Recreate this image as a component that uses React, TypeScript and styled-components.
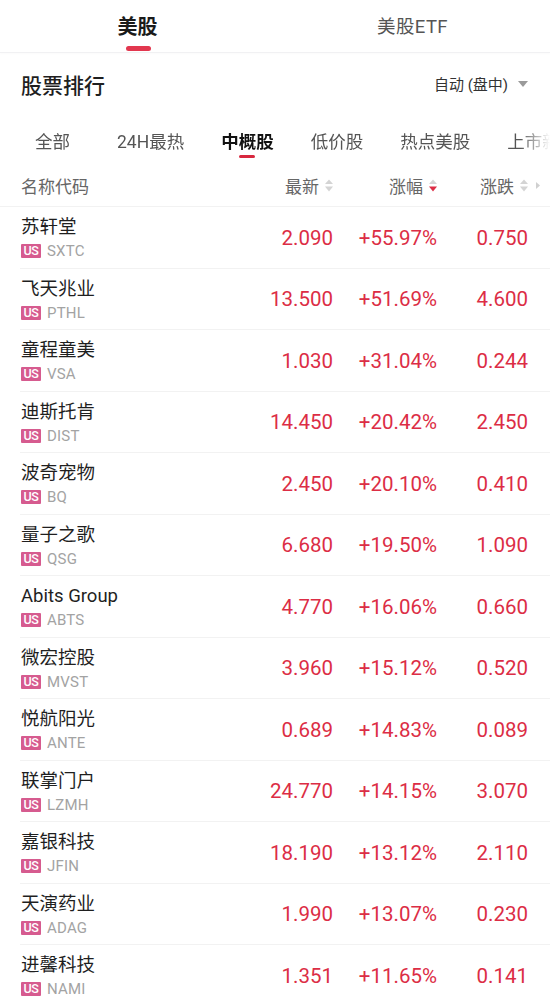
import React from 'react';
import styled, { createGlobalStyle } from 'styled-components';

interface Stock {
  name: string;
  code: string;
  price: string;
  pct: string;
  change: string;
}

const stocks: Stock[] = [
  { name: '苏轩堂', code: 'SXTC', price: '2.090', pct: '+55.97%', change: '0.750' },
  { name: '飞天兆业', code: 'PTHL', price: '13.500', pct: '+51.69%', change: '4.600' },
  { name: '童程童美', code: 'VSA', price: '1.030', pct: '+31.04%', change: '0.244' },
  { name: '迪斯托肯', code: 'DIST', price: '14.450', pct: '+20.42%', change: '2.450' },
  { name: '波奇宠物', code: 'BQ', price: '2.450', pct: '+20.10%', change: '0.410' },
  { name: '量子之歌', code: 'QSG', price: '6.680', pct: '+19.50%', change: '1.090' },
  { name: 'Abits Group', code: 'ABTS', price: '4.770', pct: '+16.06%', change: '0.660' },
  { name: '微宏控股', code: 'MVST', price: '3.960', pct: '+15.12%', change: '0.520' },
  { name: '悦航阳光', code: 'ANTE', price: '0.689', pct: '+14.83%', change: '0.089' },
  { name: '联掌门户', code: 'LZMH', price: '24.770', pct: '+14.15%', change: '3.070' },
  { name: '嘉银科技', code: 'JFIN', price: '18.190', pct: '+13.12%', change: '2.110' },
  { name: '天演药业', code: 'ADAG', price: '1.990', pct: '+13.07%', change: '0.230' },
  { name: '进馨科技', code: 'NAMI', price: '1.351', pct: '+11.65%', change: '0.141' },
];

const categories = ['全部', '24H最热', '中概股', '低价股', '热点美股', '上市新股'];

const RED = '#dc2d45';

const SortIcon: React.FC<{ down?: boolean }> = ({ down }) => (
  <svg width="8" height="13" viewBox="0 0 8 13">
    <polygon points="0,5 4,0.5 8,5" fill="#d4d4d4" />
    <polygon points="0,7.5 8,7.5 4,12.5" fill={down ? RED : '#d4d4d4'} />
  </svg>
);

const App: React.FC = () => {
  //render
  return (
    <Page>
      <GlobalStyle />
      <TopTabs>
        <TopTab active>美股</TopTab>
        <TopTab>美股ETF</TopTab>
      </TopTabs>
      <TitleBar>
        <Title>股票排行</Title>
        <Mode>
          自动 (盘中)
          <svg width="10" height="6" viewBox="0 0 10 6">
            <polygon points="0,0 10,0 5,6" fill="#9a9a9a" />
          </svg>
        </Mode>
      </TitleBar>
      <CatBar>
        {categories.map((c) => (
          <CatTab key={c} active={c === '中概股'}>
            {c}
          </CatTab>
        ))}
      </CatBar>
      <HeadRow>
        <HeadCell align="left">名称代码</HeadCell>
        <HeadCell>
          最新 <SortIcon />
        </HeadCell>
        <HeadCell>
          涨幅 <SortIcon down />
        </HeadCell>
        <HeadCell>
          涨跌 <SortIcon />
        </HeadCell>
        <MoreArrow>
          <svg width="4" height="7" viewBox="0 0 4 7">
            <polygon points="0,0 4,3.5 0,7" fill="#d0d0d0" />
          </svg>
        </MoreArrow>
      </HeadRow>
      <List>
        {stocks.map((s) => (
          <Row key={s.code}>
            <NameCell>
              <Name>{s.name}</Name>
              <CodeLine>
                <Badge>US</Badge>
                <Ticker>{s.code}</Ticker>
              </CodeLine>
            </NameCell>
            <Num>{s.price}</Num>
            <Num>{s.pct}</Num>
            <Num>{s.change}</Num>
            <span />
          </Row>
        ))}
      </List>
    </Page>
  );
};

//styles
const GlobalStyle = createGlobalStyle`
  body {
    margin: 0;
    background: #fff;
    font-family: Roboto, "Noto Sans CJK SC", sans-serif;
    color: #1f1f1f;
  }
`;

const Page = styled.div`
  width: 550px;
  height: 1005px;
  overflow: hidden;
  background: #fff;
`;

const TopTabs = styled.div`
  display: flex;
  height: 52px;
  border-bottom: 1px solid #f1f1f3;
  box-shadow: 0 1px 2px rgba(0, 0, 0, 0.02);
`;

const TopTab = styled.div<{ active?: boolean }>`
  position: relative;
  flex: 1;
  text-align: center;
  padding-top: 15px;
  line-height: 24px;
  font-size: ${(p) => (p.active ? '20px' : '18.5px')};
  font-weight: ${(p) => (p.active ? 600 : 400)};
  color: ${(p) => (p.active ? '#1a1a1a' : '#555')};
  letter-spacing: ${(p) => (p.active ? '0' : '0.4px')};
  &::after {
    content: '';
    display: ${(p) => (p.active ? 'block' : 'none')};
    position: absolute;
    left: 50%;
    bottom: 1px;
    width: 25px;
    height: 5px;
    margin-left: -12px;
    border-radius: 3px;
    background: #e2374f;
  }
`;

const TitleBar = styled.div`
  display: flex;
  align-items: center;
  justify-content: space-between;
  height: 61px;
  padding: 0 22px 0 21px;
`;

const Title = styled.div`
  font-size: 21px;
  font-weight: 500;
  color: #1f1f1f;
`;

const Mode = styled.div`
  display: flex;
  align-items: center;
  gap: 10px;
  font-size: 15px;
  color: #333;
`;

const CatBar = styled.div`
  display: flex;
  gap: 37px;
  height: 51px;
  padding-left: 35px;
  white-space: nowrap;
  overflow: hidden;
  -webkit-mask-image: linear-gradient(to right, #000 calc(100% - 30px), transparent 100%);
  mask-image: linear-gradient(to right, #000 calc(100% - 30px), transparent 100%);
`;

const CatTab = styled.div<{ active?: boolean }>`
  position: relative;
  padding-top: 18px;
  line-height: 20px;
  font-size: 17.5px;
  font-weight: ${(p) => (p.active ? 700 : 400)};
  color: ${(p) => (p.active ? '#111' : '#555')};
  &:first-child {
    margin-right: 10px;
  }
  &::after {
    content: '';
    display: ${(p) => (p.active ? 'block' : 'none')};
    position: absolute;
    left: 50%;
    top: 41px;
    width: 16px;
    height: 3px;
    margin-left: -8px;
    border-radius: 2px;
    background: #d8283f;
  }
`;

const Grid = styled.div`
  display: grid;
  grid-template-columns: 1fr 110px 104px 91px 22px;
  align-items: center;
  padding-left: 21px;
`;

const HeadRow = styled(Grid)`
  height: 41px;
  border-bottom: 1px solid #f2f2f2;
`;

const HeadCell = styled.div<{ align?: 'left' | 'right' }>`
  display: flex;
  align-items: center;
  justify-content: ${(p) => (p.align === 'left' ? 'flex-start' : 'flex-end')};
  gap: 2px;
  font-size: 17px;
  color: #666;
  svg {
    margin-left: 4px;
  }
`;

const MoreArrow = styled.div`
  display: flex;
  align-items: center;
  padding-left: 8px;
`;

const List = styled.div`
  display: flex;
  flex-direction: column;
`;

const Row = styled(Grid)`
  height: 61.5px;
  box-sizing: border-box;
  position: relative;
  &::after {
    content: '';
    position: absolute;
    left: 20px;
    right: 0;
    bottom: 0;
    height: 1px;
    background: #f2f2f2;
  }
`;

const NameCell = styled.div`
  display: flex;
  flex-direction: column;
  gap: 3px;
`;

const Name = styled.div`
  font-size: 18.5px;
  line-height: 24px;
  color: #1f1f1f;
  white-space: nowrap;
`;

const CodeLine = styled.div`
  display: flex;
  align-items: center;
  gap: 6px;
  height: 18px;
`;

const Badge = styled.span`
  display: inline-flex;
  align-items: center;
  justify-content: center;
  width: 20px;
  height: 14px;
  border-radius: 1px;
  background: #d65b8f;
  color: #fff;
  font-size: 12.5px;
  font-weight: 500;
  letter-spacing: -0.4px;
  line-height: 14px;
`;

const Ticker = styled.span`
  font-size: 15px;
  color: #a3a3a3;
  letter-spacing: 0.2px;
`;

const Num = styled.div`
  text-align: right;
  font-size: 20.5px;
  color: ${RED};
  white-space: nowrap;
`;

export default App;
